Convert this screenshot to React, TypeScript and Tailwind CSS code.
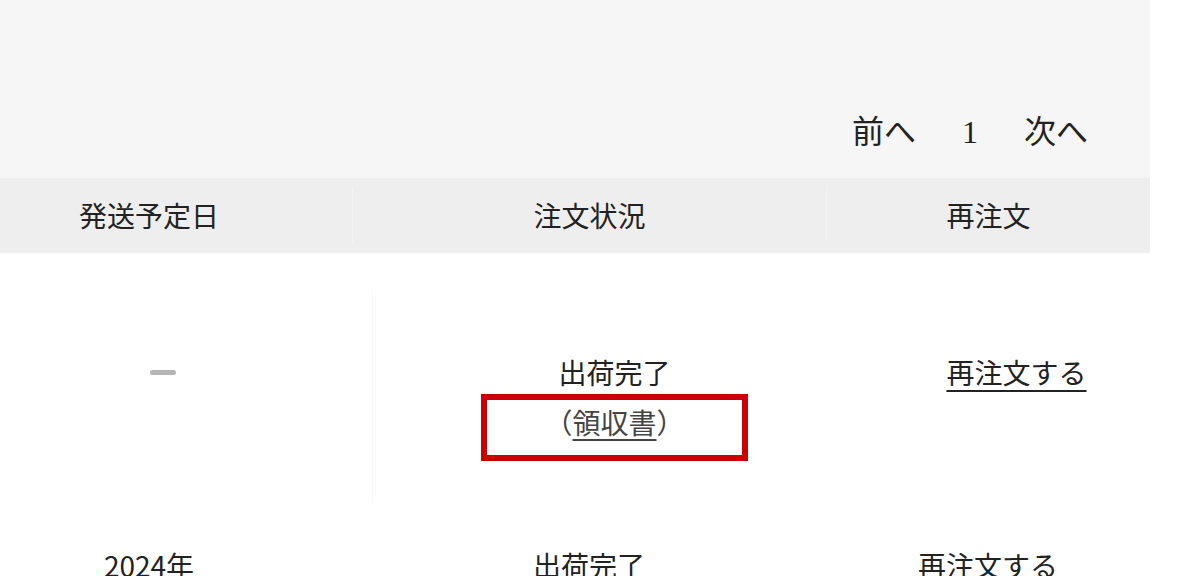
const jp = { fontFamily: '"Noto Sans CJK JP", "Noto Sans", sans-serif' };
const serif = { fontFamily: '"Liberation Serif", "DejaVu Serif", "Noto Sans CJK JP", serif' };

const headers = ["発送予定日", "注文状況", "再注文"];

export default function App() {
  return (
    <div className="w-[1200px] h-[576px] overflow-hidden bg-white text-[#222]" style={jp}>
      <div className="w-[1150px] overflow-hidden">
        {/* pagination area */}
        <div className="h-[178px] bg-[#f6f6f6] flex items-end justify-end pr-[62px] pb-[26px]">
          <div className="flex items-center gap-[46px] text-[32px] leading-[40px] text-[#222]" style={serif}>
            <span>前へ</span>
            <span>1</span>
            <span>次へ</span>
          </div>
        </div>

        {/* table header */}
        <div className="ml-[-54px] grid grid-cols-[406px_474px_324px] h-[75px] bg-[#eeeeee] text-[28px]">
          {headers.map((h, i) => (
            <div
              key={h}
              className={
                "flex items-center justify-center pb-[2px] " +
                (i > 0 ? "border-l border-[#f3f3f3] my-[10px]" : "")
              }
            >
              {h}
            </div>
          ))}
        </div>

        {/* row 1 */}
        <div className="ml-[-34px] grid grid-cols-[406px_474px_324px] h-[250px] text-[28px] leading-[40px]">
          <div className="flex justify-center pt-[117px] pr-[12px]">
            <div className="w-[26px] h-[5px] rounded-sm bg-[#b5b5b5] blur-[0.5px]" />
          </div>
          <div className="flex flex-col items-center mt-[37px] pt-[62px] pl-[10px] border-l border-[#f8f8f8]">
            <span>出荷完了</span>
            <div className="mt-[2px] w-[267px] h-[67px] border-[6px] border-[#cc0000] flex justify-center pt-[4px]">
              <span className="leading-[36px] text-[#444]">
                （<span className="underline underline-offset-[5px] decoration-[2px]">領収書</span>）
              </span>
            </div>
          </div>
          <div className="flex justify-center pt-[99px] pl-[18px] border-r border-[#f8f8f8]">
            <span className="underline underline-offset-[6px] decoration-[2px] h-[40px]">再注文する</span>
          </div>
        </div>

        {/* row 2 */}
        <div className="ml-[-54px] grid grid-cols-[406px_474px_324px] pt-[42px] text-[28px] leading-[40px]">
          <div className="flex justify-center">2024年</div>
          <div className="flex justify-center">出荷完了</div>
          <div className="flex justify-center">再注文する</div>
        </div>
      </div>
    </div>
  );
}
